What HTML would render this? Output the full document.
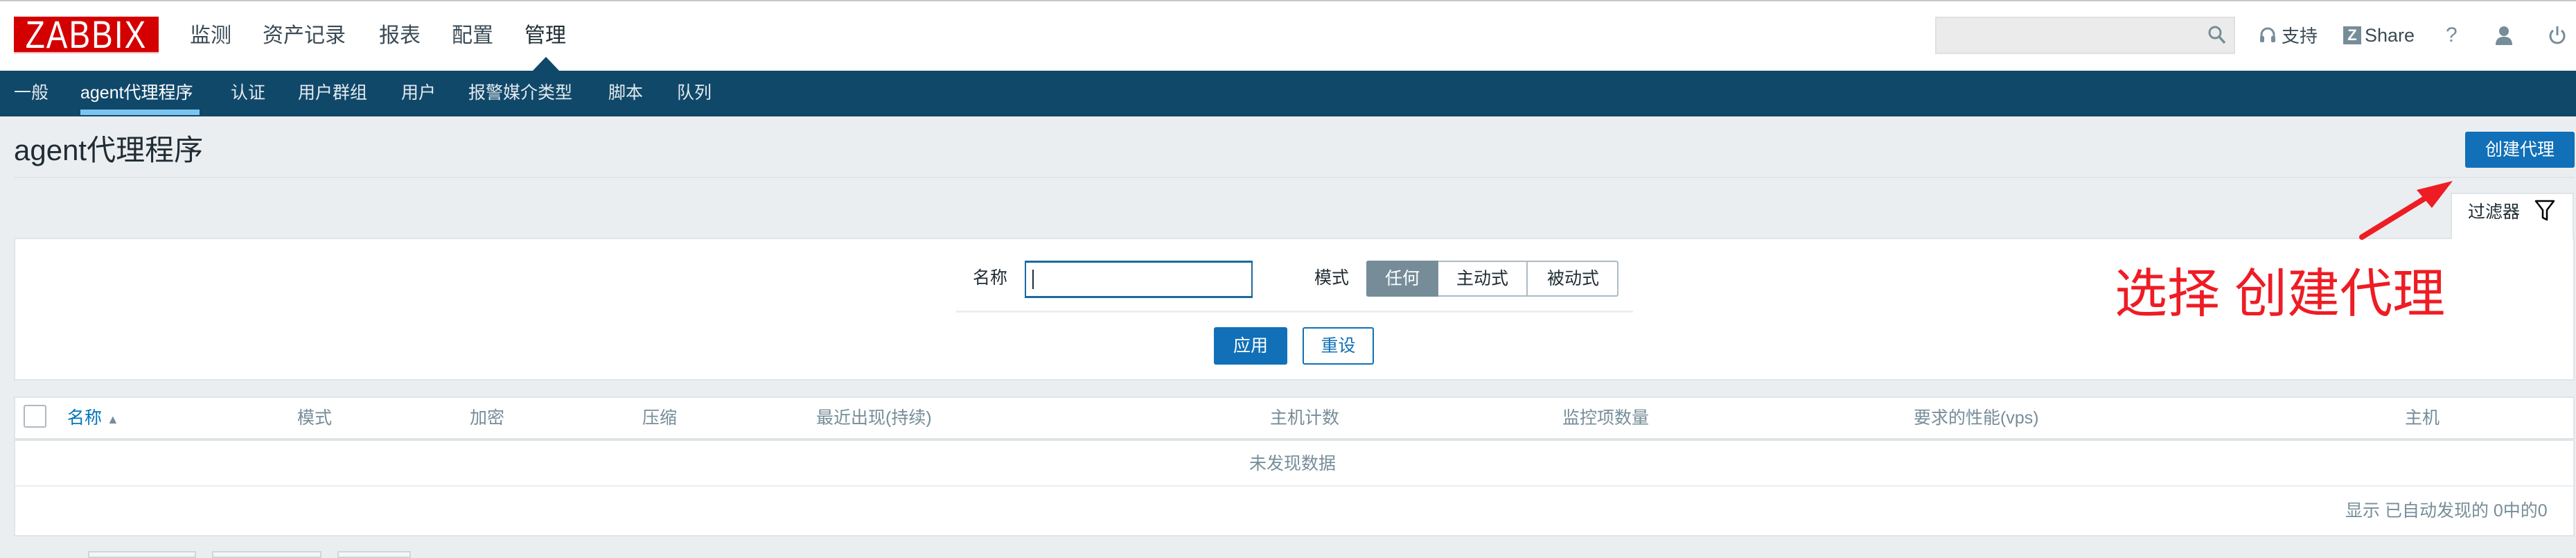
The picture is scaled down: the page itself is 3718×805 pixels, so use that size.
<!DOCTYPE html>
<html><head><meta charset="utf-8"><style>
*{margin:0;padding:0;box-sizing:border-box}
body{width:3718px;height:802px;background:#ebeef0;position:relative;overflow:hidden;font-family:"Liberation Sans","Noto Sans CJK SC",sans-serif;}
.a{position:absolute;white-space:nowrap}
.top{left:0;top:0;width:3718px;height:102px;background:#fff;border-top:2px solid #c8c8c8}
.nav{left:0;top:102px;width:3718px;height:66px;background:#10486a}
.mm{top:34px;font-size:30px;color:#3a4a55;line-height:36px}
.sn{top:118px;font-size:25px;color:#e4eaee;line-height:32px}
.th{top:588px;font-size:25px;color:#768d99;line-height:30px}
</style></head><body>
<div class="a top"></div>
<div class="a" style="left:20px;top:24px;width:209px;height:53px;background:#d40000;border-bottom:2px solid #f0b0b0;overflow:hidden"><div style="color:#fff;font-size:46px;line-height:53px;text-align:center;transform:scaleY(1.2);letter-spacing:2px">ZABBIX</div></div>
<div class="a mm" style="left:274px">监测</div>
<div class="a mm" style="left:379px">资产记录</div>
<div class="a mm" style="left:547px">报表</div>
<div class="a mm" style="left:652px">配置</div>
<div class="a mm" style="left:757px;color:#1f2c33">管理</div>
<div class="a nav"></div>
<div class="a" style="left:768px;top:82px;width:0;height:0;border-left:20px solid transparent;border-right:20px solid transparent;border-bottom:21px solid #10486a"></div>
<div class="a sn" style="left:20px">一般</div>
<div class="a sn" style="left:116px;color:#fff">agent代理程序</div>
<div class="a" style="left:116px;top:158px;width:172px;height:8px;background:#7cc5f0"></div>
<div class="a sn" style="left:333px">认证</div>
<div class="a sn" style="left:430px">用户群组</div>
<div class="a sn" style="left:579px">用户</div>
<div class="a sn" style="left:676px">报警媒介类型</div>
<div class="a sn" style="left:878px">脚本</div>
<div class="a sn" style="left:977px">队列</div>
<div class="a" style="left:2793px;top:24px;width:433px;height:54px;background:#ebebeb;border:2px solid #e0e0e0"></div>
<svg class="a" style="left:3186px;top:36px" width="28" height="30" viewBox="0 0 28 30"><circle cx="11" cy="11" r="8" fill="none" stroke="#768d99" stroke-width="3"/><path d="M17 17L25 26" stroke="#768d99" stroke-width="3.5"/></svg>
<svg class="a" style="left:3260px;top:38px" width="26" height="28" viewBox="0 0 26 28"><path d="M4 18V12a9 9 0 0118 0v6" fill="none" stroke="#768d99" stroke-width="3"/><rect x="2" y="14" width="6" height="9" rx="2" fill="#768d99"/><rect x="18" y="14" width="6" height="9" rx="2" fill="#768d99"/></svg>
<div class="a" style="left:3293px;top:36px;font-size:26px;color:#3a4a55;line-height:32px">支持</div>
<div class="a" style="left:3382px;top:38px;width:26px;height:26px;background:#768d99;color:#fff;font-size:22px;font-weight:bold;text-align:center;line-height:26px">Z</div>
<div class="a" style="left:3413px;top:35px;font-size:27px;color:#3a4a55;line-height:32px">Share</div>
<div class="a" style="left:3530px;top:33px;font-size:30px;color:#768d99;line-height:36px">?</div>
<svg class="a" style="left:3600px;top:36px" width="28" height="30" viewBox="0 0 28 30"><circle cx="14" cy="9" r="7" fill="#768d99"/><path d="M2 29c0-9 5-12 12-12s12 3 12 12z" fill="#768d99"/></svg>
<svg class="a" style="left:3677px;top:36px" width="28" height="30" viewBox="0 0 28 30"><path d="M8 8a10 10 0 1012 0" fill="none" stroke="#768d99" stroke-width="3"/><path d="M14 2v13" stroke="#768d99" stroke-width="3"/></svg>
<div class="a" style="left:20px;top:192px;font-size:42px;color:#1f2c33;line-height:50px">agent代理程序</div>
<div class="a" style="left:20px;top:255px;width:3696px;height:2px;background:#dfe4e7"></div>
<div class="a" style="left:3558px;top:190px;width:158px;height:52px;background:#1170b8;border-radius:3px;color:#fff;font-size:25px;text-align:center;line-height:52px">创建代理</div>
<div class="a" style="left:3537px;top:278px;width:178px;height:70px;background:#fff;border:2px solid #dfe4e7;border-bottom:none"></div>
<div class="a" style="left:3562px;top:290px;font-size:25px;color:#1f2c33;line-height:32px">过滤器</div>
<svg class="a" style="left:3658px;top:288px" width="30" height="32" viewBox="0 0 30 32"><path d="M2 2h26L18 15v14l-6-3V15z" fill="none" stroke="#000" stroke-width="2.5" stroke-linejoin="round"/></svg>
<div class="a" style="left:20px;top:343px;width:3696px;height:206px;background:#fff;border:2px solid #dfe4e7"></div>
<div class="a" style="left:3539px;top:341px;width:174px;height:6px;background:#fff"></div>
<div class="a" style="left:1404px;top:386px;font-size:25px;color:#1f2c33;line-height:30px">名称</div>
<div class="a" style="left:1479px;top:376px;width:329px;height:54px;background:#fff;border:2px solid #1a6aa0;border-top-width:3px;border-bottom-width:3px"></div>
<div class="a" style="left:1490px;top:389px;width:2px;height:28px;background:#1f2c33"></div>
<div class="a" style="left:1897px;top:386px;font-size:25px;color:#1f2c33;line-height:30px">模式</div>
<div class="a" style="left:1972px;top:376px;width:364px;height:52px;border:2px solid #acbbc2;border-radius:3px;background:#fff"></div>
<div class="a" style="left:1972px;top:376px;width:104px;height:52px;background:#768d99;border-radius:3px 0 0 3px;color:#fff;font-size:25px;text-align:center;line-height:52px">任何</div>
<div class="a" style="left:2076px;top:376px;width:129px;height:52px;border-right:2px solid #acbbc2;color:#1f2c33;font-size:25px;text-align:center;line-height:52px">主动式</div>
<div class="a" style="left:2205px;top:376px;width:131px;height:52px;color:#1f2c33;font-size:25px;text-align:center;line-height:52px">被动式</div>
<div class="a" style="left:1380px;top:448px;width:977px;height:3px;background:#ebeef0"></div>
<div class="a" style="left:1752px;top:472px;width:106px;height:54px;background:#1170b8;border-radius:3px;color:#fff;font-size:25px;text-align:center;line-height:54px">应用</div>
<div class="a" style="left:1880px;top:472px;width:103px;height:54px;background:#fff;border:2px solid #1170b8;border-radius:3px;color:#1170b8;font-size:25px;text-align:center;line-height:50px">重设</div>
<div class="a" style="left:3052px;top:380px;font-size:76px;color:#ee1c24;line-height:90px">选择 创建代理</div>
<svg class="a" style="left:3390px;top:250px" width="170" height="110" viewBox="3390 250 170 110"><path d="M3409 342L3505 283" stroke="#ee1c24" stroke-width="8" stroke-linecap="round"/><path d="M3540 261L3488 274L3510 300z" fill="#ee1c24"/></svg>
<div class="a" style="left:20px;top:572px;width:3696px;height:202px;background:#fff;border:2px solid #dfe4e7"></div>
<div class="a" style="left:22px;top:632px;width:3692px;height:4px;background:#dfe4e7"></div>
<div class="a" style="left:22px;top:700px;width:3692px;height:2px;background:#ebeef0"></div>
<div class="a" style="left:34px;top:584px;width:33px;height:33px;border:2px solid #acbbc2;border-radius:3px;background:#fff"></div>
<div class="a th" style="left:97px;color:#0275b8">名称 <span style="font-size:18px;color:#768d99">▲</span></div>
<div class="a th" style="left:429px">模式</div>
<div class="a th" style="left:678px">加密</div>
<div class="a th" style="left:927px">压缩</div>
<div class="a th" style="left:1178px">最近出现(持续)</div>
<div class="a th" style="left:1833px">主机计数</div>
<div class="a th" style="left:2255px">监控项数量</div>
<div class="a th" style="left:2762px">要求的性能(vps)</div>
<div class="a th" style="left:3471px">主机</div>
<div class="a" style="left:1803px;top:654px;font-size:25px;color:#768d99;line-height:30px">未发现数据</div>
<div class="a" style="left:3385px;top:722px;font-size:25px;color:#768d99;line-height:30px">显示 已自动发现的 0中的0</div>
<div class="a" style="left:127px;top:795px;width:156px;height:10px;background:#f4f5f6;border:2px solid #cfd6da"></div>
<div class="a" style="left:306px;top:795px;width:158px;height:10px;background:#f4f5f6;border:2px solid #cfd6da"></div>
<div class="a" style="left:487px;top:795px;width:106px;height:10px;background:#f4f5f6;border:2px solid #cfd6da"></div>
</body></html>
